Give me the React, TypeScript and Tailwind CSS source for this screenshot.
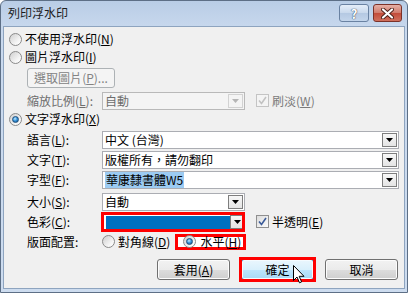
import React from 'react';

// mnemonic letter, e.g. (N) with the N underlined
const Mn = ({ k }: { k: string }) => (
  <span>
    (<u className="underline-offset-[1px]">{k}</u>)
  </span>
);

const Radio = ({ checked }: { checked?: boolean }) => (
  <span className="w-[13px] h-[13px] shrink-0 rounded-full border border-[#8a8a8a] bg-[linear-gradient(135deg,#cfcfcf,#f6f6f6_70%,#ffffff)] flex items-center justify-center">
    {checked && (
      <span className="w-[7px] h-[7px] rounded-full border border-[#1f4f7c] bg-[radial-gradient(circle_at_40%_35%,#c8ecff,#3a97dd_45%,#0f4a82)]" />
    )}
  </span>
);

const Check = ({ disabled }: { disabled?: boolean }) => (
  <span
    className={
      disabled
        ? 'w-[13px] h-[13px] shrink-0 border border-[#c4c4c4] bg-[#f4f4f4] flex items-center justify-center'
        : 'w-[13px] h-[13px] shrink-0 border border-[#8f8f8f] bg-[linear-gradient(135deg,#dcdcdc,#fbfbfb)] flex items-center justify-center'
    }
  >
    <svg width="9" height="9" viewBox="0 0 9 9">
      <path d="M1 4.5 L3.5 7.5 L8 1" fill="none" stroke={disabled ? '#c2c2c2' : '#3a5a98'} strokeWidth="1.6" />
    </svg>
  </span>
);

const DropBtn = ({ disabled }: { disabled?: boolean }) => (
  <span
    className={
      disabled
        ? 'w-[15px] h-[14px] mr-[1px] shrink-0 border border-[#d2d2d2] bg-[#f4f4f4] flex items-center justify-center'
        : 'w-[15px] h-[14px] mr-[1px] shrink-0 border border-[#7e7e7e] bg-[linear-gradient(#f7f7f7,#e4e4e4)] flex items-center justify-center'
    }
  >
    <svg width="7" height="4" viewBox="0 0 7 4">
      <path d="M0 0 H7 L3.5 4 Z" fill={disabled ? '#b5b5b5' : '#000'} />
    </svg>
  </span>
);

const Combo = ({
  wide,
  disabled,
  children,
}: {
  wide?: boolean;
  disabled?: boolean;
  children?: React.ReactNode;
}) => (
  <div
    className={[
      wide ? 'w-[297px]' : 'w-[143px]',
      'h-[18px] flex items-center border',
      disabled ? 'border-[#b9b9b9] bg-[#f4f4f4] text-[#6d6d6d]' : 'border-[#abadb3] bg-white',
    ].join(' ')}
  >
    <div className="flex-1 h-full flex items-center pl-[2px] whitespace-nowrap">{children}</div>
    <DropBtn disabled={disabled} />
  </div>
);

const Btn = ({ children, hot }: { children: React.ReactNode; hot?: boolean }) => (
  <div
    className={
      hot
        ? 'w-[73px] h-[21px] rounded-[3px] border border-[#3c7fb1] shadow-[inset_0_0_0_1px_#f4fbff] bg-[linear-gradient(#eaf6fd,#d9f0fc_50%,#bee6fd_50%,#a7d9f5)] flex items-center justify-center'
        : 'w-[73px] h-[21px] rounded-[3px] border border-[#707070] shadow-[inset_0_0_0_1px_#fcfcfc] bg-[linear-gradient(#f2f2f2,#ebebeb_50%,#dddddd_50%,#cfcfcf)] flex items-center justify-center'
    }
  >
    {children}
  </div>
);

const Field = ({ label, children, className }: { label: React.ReactNode; children: React.ReactNode; className: string }) => (
  <div className={`flex items-center pl-[23px] ${className}`}>
    <span className="w-[75px] shrink-0">{label}</span>
    {children}
  </div>
);

export default function App() {
  return (
    <div className="relative w-[408px] h-[293px] overflow-hidden font-['Noto_Sans_CJK_TC',sans-serif] text-[12px] leading-none text-black">
      <div className="w-full h-full flex flex-col rounded-t-[6px] border border-[#5d6f86] bg-[linear-gradient(#b9cde6,#c9d9ee_30px,#cddcef)] px-[2px] pb-[3px]">
        {/* title bar */}
        <div className="h-[25px] shrink-0 flex items-start">
          <span className="pl-[5px] pt-[6px] text-[#1b1b1b]">列印浮水印</span>
          <div className="ml-auto mr-[3px] mt-[3px] flex gap-[4px]">
            <div className="w-[30px] h-[18px] rounded-[3px] border border-[#6a82a2] bg-[linear-gradient(#e5eef9,#c8d8ec_50%,#b4c8e2_50%,#c3d5eb)] flex items-center justify-center text-[13px] font-bold text-white [text-shadow:0_0_1px_#2c3e55,0_0_1px_#2c3e55]">
              ?
            </div>
            <div className="w-[29px] h-[18px] rounded-[3px] border border-[#7b3128] bg-[linear-gradient(#e6b0a6,#d07a6b_50%,#c24a38_50%,#d0705d)] flex items-center justify-center">
              <svg width="13" height="11" viewBox="0 0 13 11">
                <path d="M2 1.5 L11 9.5 M11 1.5 L2 9.5" stroke="#4a1f18" strokeWidth="4" strokeLinecap="round" />
                <path d="M2 1.5 L11 9.5 M11 1.5 L2 9.5" stroke="#ffffff" strokeWidth="2.2" strokeLinecap="round" />
              </svg>
            </div>
          </div>
        </div>

        {/* client area */}
        <div className="flex-1 flex flex-col border border-[#8ea4bf] bg-[#f0f0f0]">
          <div className="mt-[3px] h-[18px] flex items-center gap-[3px] pl-[5px]">
            <Radio />
            <span>
              不使用浮水印<Mn k="N" />
            </span>
          </div>
          <div className="h-[18px] flex items-center gap-[3px] pl-[5px]">
            <Radio />
            <span>
              圖片浮水印<Mn k="I" />
            </span>
          </div>
          <div className="mt-[2px] pl-[23px]">
            <div className="w-[88px] h-[20px] rounded-[3px] border border-[#adb2b5] bg-[#f4f4f4] text-[#838383] flex items-center justify-center">
              選取圖片<Mn k="P" />...
            </div>
          </div>
          <Field className="mt-[3px] h-[19px] text-[#6d6d6d]" label={<>縮放比例<Mn k="L" />:</>}>
            <Combo disabled>自動</Combo>
            <span className="ml-[11px] flex items-center gap-[3px]">
              <Check disabled />
              <span className="text-[#7a7a7a]">
                刷淡<Mn k="W" />
              </span>
            </span>
          </Field>
          <div className="h-[18px] flex items-center gap-[3px] pl-[5px]">
            <Radio checked />
            <span>
              文字浮水印<Mn k="X" />
            </span>
          </div>
          <Field className="mt-[2px] h-[19px]" label={<>語言<Mn k="L" />:</>}>
            <Combo wide>中文 (台灣)</Combo>
          </Field>
          <Field className="mt-[1px] h-[19px]" label={<>文字<Mn k="T" />:</>}>
            <Combo wide>版權所有，請勿翻印</Combo>
          </Field>
          <Field className="mt-[1px] h-[19px]" label={<>字型<Mn k="F" />:</>}>
            <Combo wide>
              <span className="bg-[#9ccbf2] px-[1px] py-[2px]">華康隸書體W5</span>
            </Combo>
          </Field>
          <Field className="mt-[3px] h-[19px]" label={<>大小<Mn k="S" />:</>}>
            <Combo>自動</Combo>
          </Field>
          <Field className="h-[21px]" label={<>色彩<Mn k="C" />:</>}>
            <div className="relative">
              <Combo>
                <span className="w-[124px] h-[13px] ml-[1px] mt-[1px] bg-[#0070c0]" />
              </Combo>
              <span className="absolute -left-[1px] right-0 -top-[1px] -bottom-[1px] border-[3px] border-[#ff0000]" />
            </div>
            <span className="ml-[11px] flex items-center gap-[3px]">
              <Check />
              <span>
                半透明<Mn k="E" />
              </span>
            </span>
          </Field>
          <Field className="h-[19px]" label="版面配置:">
            <span className="flex items-center gap-[3px]">
              <Radio />
              <span>
                對角線<Mn k="D" />
              </span>
            </span>
            <span className="relative ml-[13px] h-[16px] flex items-center gap-[4px]">
              <span className="absolute -left-[8px] -right-[5px] top-0 bottom-0 border-[3px] border-[#ff0000] bg-white" />
              <span className="relative flex items-center gap-[4px]">
                <Radio checked />
                <span>
                  水平<Mn k="H" />
                </span>
              </span>
            </span>
          </Field>
          <div className="mt-[8px] flex justify-end gap-[11px] pr-[6px]">
            <Btn>
              套用<Mn k="A" />
            </Btn>
            <div className="relative">
              <Btn hot>確定</Btn>
              <span className="absolute -inset-[2px] border-[3px] border-[#ff0000]" />
            </div>
            <Btn>取消</Btn>
          </div>
        </div>
      </div>

      {/* mouse pointer */}
      <svg className="absolute left-[293px] top-[265px]" width="12" height="19" viewBox="0 0 12 19">
        <path d="M0.5 0.5 V15.5 L4 12 L6.5 17.8 L8.6 16.9 L6.2 11.3 H11 Z" fill="#ffffff" stroke="#000" strokeWidth="1" strokeLinejoin="round" />
      </svg>
    </div>
  );
}
